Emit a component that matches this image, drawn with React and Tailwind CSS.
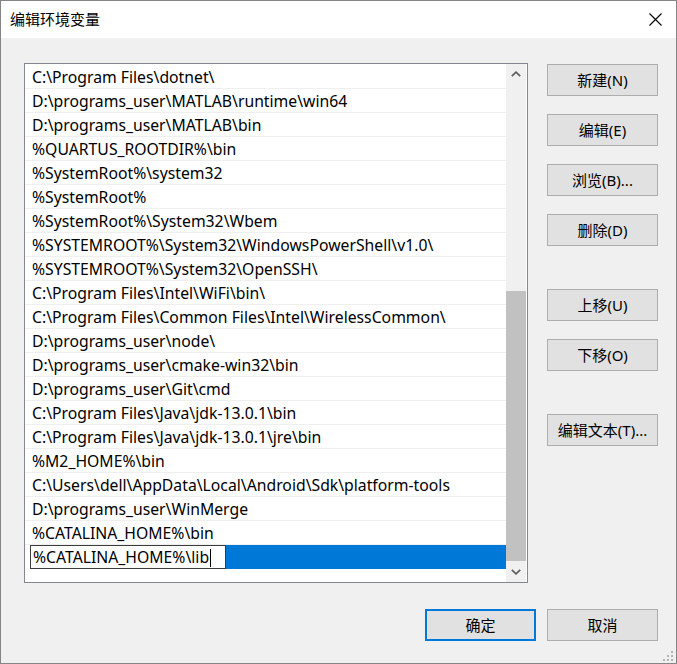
import React from "react";

const paths = [
  "C:\\Program Files\\dotnet\\",
  "D:\\programs_user\\MATLAB\\runtime\\win64",
  "D:\\programs_user\\MATLAB\\bin",
  "%QUARTUS_ROOTDIR%\\bin",
  "%SystemRoot%\\system32",
  "%SystemRoot%",
  "%SystemRoot%\\System32\\Wbem",
  "%SYSTEMROOT%\\System32\\WindowsPowerShell\\v1.0\\",
  "%SYSTEMROOT%\\System32\\OpenSSH\\",
  "C:\\Program Files\\Intel\\WiFi\\bin\\",
  "C:\\Program Files\\Common Files\\Intel\\WirelessCommon\\",
  "D:\\programs_user\\node\\",
  "D:\\programs_user\\cmake-win32\\bin",
  "D:\\programs_user\\Git\\cmd",
  "C:\\Program Files\\Java\\jdk-13.0.1\\bin",
  "C:\\Program Files\\Java\\jdk-13.0.1\\jre\\bin",
  "%M2_HOME%\\bin",
  "C:\\Users\\dell\\AppData\\Local\\Android\\Sdk\\platform-tools",
  "D:\\programs_user\\WinMerge",
  "%CATALINA_HOME%\\bin",
];

const font = { fontFamily: '"Noto Sans", "Noto Sans CJK SC", sans-serif' };

function Button({ children, primary = false, className = "" }) {
  return (
    <button
      className={`flex h-[32px] w-[111px] items-center justify-center bg-[#e1e1e1] text-[15px] leading-none text-black ${
        primary ? "border-2 border-[#0078d7]" : "border border-[#adadad]"
      } ${className}`}
    >
      {children}
    </button>
  );
}

function Chevron({ down = false }) {
  return (
    <svg width="10" height="6" viewBox="0 0 10 6" className={down ? "rotate-180" : ""}>
      <polyline points="0.8,5.2 5,1.2 9.2,5.2" fill="none" stroke="#606060" strokeWidth="1.8" />
    </svg>
  );
}

export default function App() {
  return (
    <div
      className="relative flex h-[664px] w-[677px] flex-col border border-[#858585] bg-[#f0f0f0] text-black"
      style={font}
    >
      <div className="flex h-[37px] items-center justify-between bg-white pl-[9px] pr-[14px]">
        <span className="text-[15px]">编辑环境变量</span>
        <svg width="13" height="13" viewBox="0 0 13 13">
          <path d="M0.5 0.5 L12.5 12.5 M12.5 0.5 L0.5 12.5" stroke="#000" strokeWidth="1.1" />
        </svg>
      </div>

      <div className="flex flex-1 flex-col pl-[23px] pr-[18px] pt-[25px]">
        <div className="flex">
          <div className="flex h-[520px] w-[504px] border border-[#828790] bg-white">
            <div className="flex-1 pt-[1px]">
              {paths.map((p) => (
                <div
                  key={p}
                  className="flex h-[24px] items-center border-b border-[#efefef] pl-[7px] pt-[2px] text-[15.75px] leading-none"
                >
                  {p}
                </div>
              ))}
              <div className="flex h-[24px] pl-[5px]">
                <div className="flex h-[24px] w-[196px] items-center border border-[#3c3c3c] bg-white pl-[2px] pt-[1px] text-[15.75px] leading-none">
                  %CATALINA_HOME%\lib
                  <span className="ml-[1px] h-[18px] w-[1px] bg-black" />
                </div>
                <div className="flex-1 bg-[#0078d7]" />
              </div>
            </div>
            <div className="mr-[1px] flex w-[20px] flex-col bg-[#f0f0f0]">
              <div className="flex h-[20px] items-center justify-center">
                <Chevron />
              </div>
              <div className="flex-1">
                <div className="mt-[207px] h-[270px] bg-[#c1c1c1]" />
              </div>
              <div className="flex h-[21px] items-center justify-center">
                <Chevron down />
              </div>
            </div>
          </div>

          <div className="ml-[19px] mt-[1px] flex flex-col">
            <Button>新建(N)</Button>
            <Button className="mt-[18px]">编辑(E)</Button>
            <Button className="mt-[18px]">浏览(B)...</Button>
            <Button className="mt-[18px]">删除(D)</Button>
            <Button className="mt-[43px]">上移(U)</Button>
            <Button className="mt-[18px]">下移(O)</Button>
            <Button className="mt-[43px]">编辑文本(T)...</Button>
          </div>
        </div>

        <div className="mt-[26px] flex justify-end gap-[11px]">
          <Button primary>确定</Button>
          <Button>取消</Button>
        </div>
      </div>

      <svg className="absolute bottom-[1px] right-[2px]" width="11" height="11" viewBox="0 0 11 11">
        <g fill="#b4b4b4">
          <rect x="8" y="0" width="2" height="2" />
          <rect x="4" y="4" width="2" height="2" />
          <rect x="8" y="4" width="2" height="2" />
          <rect x="0" y="8" width="2" height="2" />
          <rect x="4" y="8" width="2" height="2" />
          <rect x="8" y="8" width="2" height="2" />
        </g>
      </svg>
    </div>
  );
}
